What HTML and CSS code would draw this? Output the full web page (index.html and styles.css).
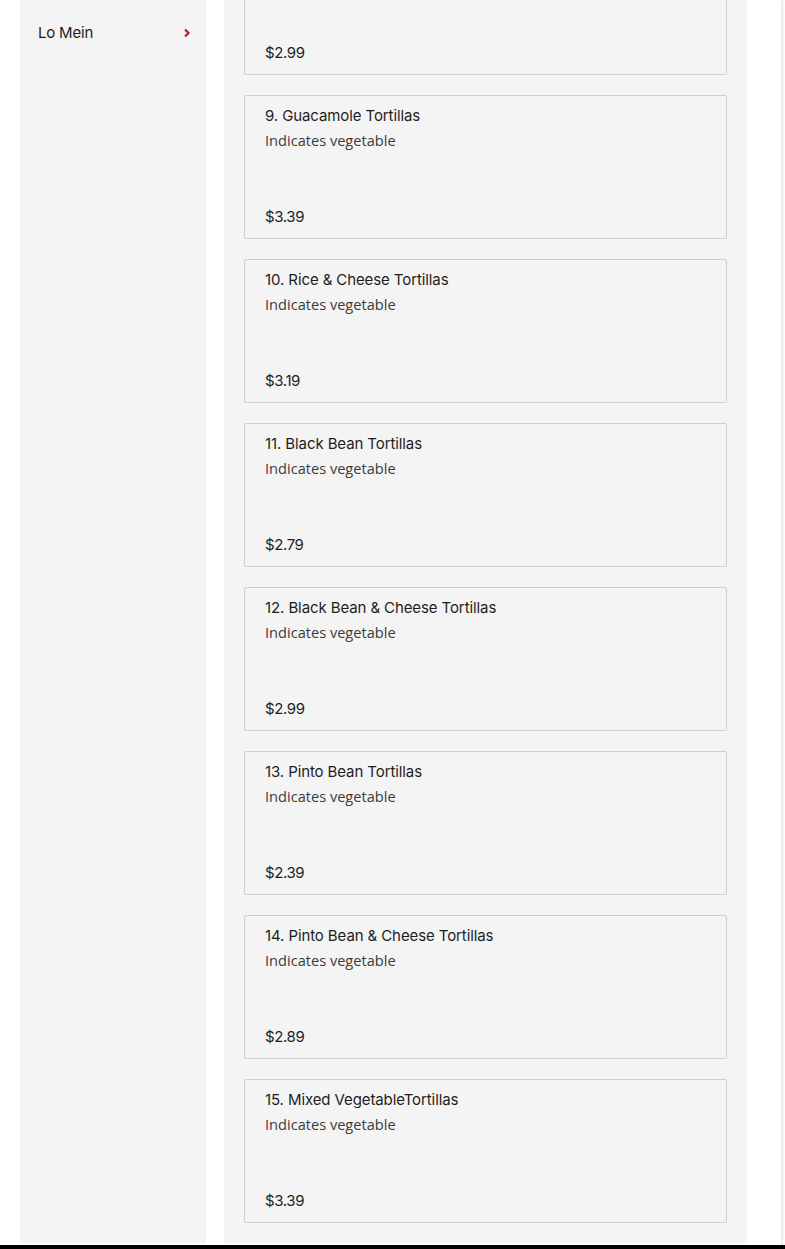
FILE: index.html
```html
<!DOCTYPE html>
<html lang="en">
  <head>
    <meta charset="UTF-8" />
    <meta name="viewport" content="width=device-width, initial-scale=1.0" />
    <title>Menu</title>
    <link rel="stylesheet" href="styles.css">
  </head>
  <body>
    <div class="page">
      <div class="content">
        <div class="side-menu">
          <div class="side-item">
            <span>Lo Mein</span>
            <svg class="chevron" width="8" height="10" viewBox="0 0 8 10">
              <path d="M2 1.5 L5.5 5 L2 8.5" fill="none" stroke="#b5202a" stroke-width="2.2" />
            </svg>
          </div>
        </div>
        <div class="menu-column">
          <div class="card-list">
            <div class="food-card food-card-cut">
              <div class="food-price">$2.99</div>
            </div>
            <div class="food-card">
              <div class="food-name">9. Guacamole Tortillas</div>
              <div class="food-desc">Indicates vegetable</div>
              <div class="food-price">$3.39</div>
            </div>
            <div class="food-card">
              <div class="food-name">10. Rice &amp; Cheese Tortillas</div>
              <div class="food-desc">Indicates vegetable</div>
              <div class="food-price">$3.19</div>
            </div>
            <div class="food-card">
              <div class="food-name">11. Black Bean Tortillas</div>
              <div class="food-desc">Indicates vegetable</div>
              <div class="food-price">$2.79</div>
            </div>
            <div class="food-card">
              <div class="food-name">12. Black Bean &amp; Cheese Tortillas</div>
              <div class="food-desc">Indicates vegetable</div>
              <div class="food-price">$2.99</div>
            </div>
            <div class="food-card">
              <div class="food-name">13. Pinto Bean Tortillas</div>
              <div class="food-desc">Indicates vegetable</div>
              <div class="food-price">$2.39</div>
            </div>
            <div class="food-card">
              <div class="food-name">14. Pinto Bean &amp; Cheese Tortillas</div>
              <div class="food-desc">Indicates vegetable</div>
              <div class="food-price">$2.89</div>
            </div>
            <div class="food-card">
              <div class="food-name">15. Mixed VegetableTortillas</div>
              <div class="food-desc">Indicates vegetable</div>
              <div class="food-price">$3.39</div>
            </div>
          </div>
        </div>
      </div>
      <div class="footer-bar"></div>
    </div>
  </body>
</html>
```

FILE: styles.css
```css
* {
  margin: 0;
  padding: 0;
  box-sizing: border-box;
}
body {
  width: 785px;
  height: 1249px;
  overflow: hidden;
  background-color: #ffffff;
  font-family: Inter, "Liberation Sans", sans-serif;
  color: #1e1e1e;
}
.page {
  display: flex;
  flex-direction: column;
  width: 781px;
  height: 1249px;
  box-shadow: 2px 0 3px rgba(0, 0, 0, 0.1);
}
.content {
  display: flex;
  gap: 18px;
  height: 1243px;
  padding-left: 20px;
}
.side-menu {
  width: 186px;
  background-color: #f4f4f4;
}
.side-item {
  display: flex;
  justify-content: space-between;
  align-items: center;
  padding: 23px 15px 0 18px;
  font-size: 15px;
  letter-spacing: -0.2px;
  line-height: 20px;
}
.chevron {
  display: block;
}
.menu-column {
  width: 523px;
  padding: 0 20px 20px;
  background-color: #f4f4f4;
}
.card-list {
  display: flex;
  flex-direction: column;
  gap: 20px;
}
.food-card {
  display: flex;
  flex-direction: column;
  height: 144px;
  padding: 10px 20px 11px;
  border: 1px solid #cfcfcf;
  border-radius: 2px;
  background-color: #f4f4f4;
}
.food-card-cut {
  height: 75px;
  border-top: none;
  border-radius: 0 0 2px 2px;
}
.food-name {
  font-size: 15px;
  line-height: 20px;
  letter-spacing: -0.1px;
}
.food-desc {
  margin-top: 4px;
  font-family: "Open Sans", sans-serif;
  font-size: 14.6px;
  line-height: 20px;
  color: #3c3c3c;
}
.food-price {
  margin-top: auto;
  font-size: 15px;
  line-height: 20px;
  letter-spacing: -0.4px;
}
.footer-bar {
  height: 4px;
  margin-top: 2px;
  width: 785px;
  background-color: #000000;
}
```
